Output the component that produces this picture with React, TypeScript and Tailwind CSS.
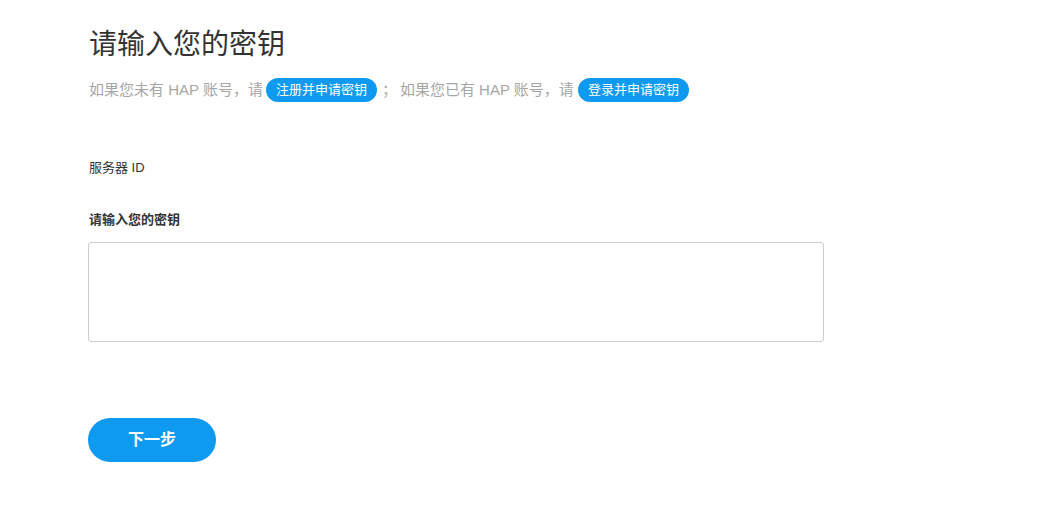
import React from 'react';

const font = { fontFamily: '"Liberation Sans", "Noto Sans CJK SC", sans-serif' };

const Pill: React.FC<{ text: string }> = ({ text }) => (
  <span className="inline-flex items-center h-[24px] px-[10px] rounded-full bg-[#0e9af0] text-white text-[13px] mx-[4px]">
    {text}
  </span>
);

const App: React.FC = () => {
  return (
    <div className="min-h-screen bg-white" style={font}>
      <div className="pl-[89px] pt-[25px] w-[823px]">
        <h1 className="text-[28px] leading-[40px] text-[#333]">请输入您的密钥</h1>
        <div className="flex items-center mt-[13px] text-[15px] text-[#a6a6a6]">
          <span className="-mr-px">如果您未有 HAP 账号，请</span>
          <Pill text="注册并申请密钥" />
          <span className="ml-[1px] mr-[3px]">；</span>
          <span>如果您已有 HAP 账号，请</span>
          <Pill text="登录并申请密钥" />
        </div>
        <div className="mt-[56px] text-[13px] text-[#333]">服务器 ID</div>
        <div className="mt-[32px] text-[13px] font-bold text-[#333]">请输入您的密钥</div>
        <textarea className="block mt-[13px] -ml-px w-[736px] h-[100px] border border-[#ccc] rounded-[3px] resize-none outline-none" />
        <button className="mt-[76px] -ml-px w-[128px] h-[44px] rounded-full bg-[#0e9af0] text-white text-[16px] font-bold">
          下一步
        </button>
      </div>
    </div>
  );
};

export default App;
